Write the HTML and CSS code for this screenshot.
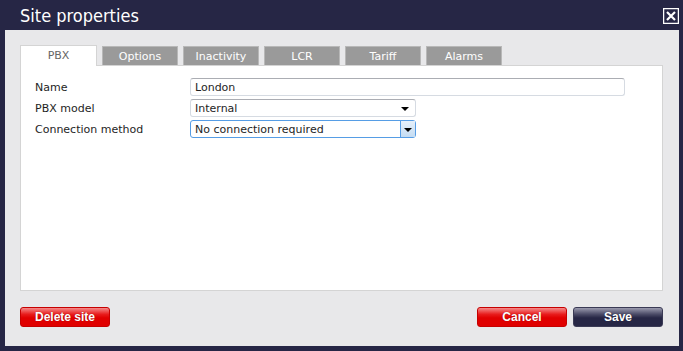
FILE: index.html
```html
<!DOCTYPE html>
<html lang="en">
<head>
    <meta charset="UTF-8">
    <title>Site properties</title>
    <link rel="stylesheet" href="styles.css">
</head>
<body>
    <div class="dialog">
        <div class="dialog-title">
            <h1>Site properties</h1>
            <button class="close" aria-label="Close">
                <svg width="16" height="16" viewBox="0 0 16 16">
                    <rect x="0.5" y="0.5" width="15" height="15" fill="none" stroke="#fff" stroke-width="1.5"/>
                    <path d="M4 4 L12 12 M12 4 L4 12" stroke="#fff" stroke-width="2.2"/>
                </svg>
            </button>
        </div>
        <div class="dialog-body">
            <div class="tabs">
                <div class="tab active">PBX</div>
                <div class="tab">Options</div>
                <div class="tab">Inactivity</div>
                <div class="tab">LCR</div>
                <div class="tab">Tariff</div>
                <div class="tab">Alarms</div>
            </div>
            <div class="tab-panel">
                <div class="form-row">
                    <label for="name">Name</label>
                    <input id="name" class="field field-wide" type="text" value="London">
                </div>
                <div class="form-row">
                    <label>PBX model</label>
                    <div class="field select">
                        <span>Internal</span>
                        <span class="arrow"></span>
                    </div>
                </div>
                <div class="form-row">
                    <label>Connection method</label>
                    <div class="field select focused">
                        <span>No connection required</span>
                        <span class="arrow-box"><span class="arrow"></span></span>
                    </div>
                </div>
            </div>
            <div class="dialog-buttons">
                <button class="btn btn-red">Delete site</button>
                <div class="btn-group">
                    <button class="btn btn-red">Cancel</button>
                    <button class="btn btn-navy">Save</button>
                </div>
            </div>
        </div>
    </div>
</body>
</html>
```

FILE: styles.css
```css
body {
    margin: 0;
    background: #262645;
    font-family: "DejaVu Sans", Verdana, sans-serif;
    font-size: 11px;
    color: #1e1e1e;
}

.dialog {
    width: 683px;
    height: 351px;
    display: flex;
    flex-direction: column;
}

.dialog-title {
    height: 30px;
    display: flex;
    align-items: center;
    justify-content: space-between;
    padding: 0 4px 0 20px;
}

.dialog-title h1 {
    margin: 0;
    font-family: "DejaVu Sans Condensed", "DejaVu Sans", sans-serif;
    font-weight: normal;
    font-size: 18px;
    color: #fff;
    padding-top: 1px;
}

.close {
    border: 0;
    background: none;
    padding: 0;
    width: 16px;
    height: 16px;
    display: block;
    margin-top: 1px;
}

.close svg {
    display: block;
}

.dialog-body {
    margin: 0 4px 5px 5px;
    height: 316px;
    box-sizing: border-box;
    background: #e8e8ea;
    padding: 15px 16px 0 15px;
}

.tabs {
    display: flex;
    gap: 5px;
    height: 20px;
    align-items: flex-end;
}

.tab {
    width: 74px;
    height: 18px;
    background: #9a9a9a;
    border: 1px solid #b8b8b8;
    border-bottom: 0;
    color: #fff;
    text-align: center;
    line-height: 19px;
}

.tab.active {
    width: 75px;
    height: 20px;
    background: #fff;
    border-color: #d4d4d4;
    color: #666;
    line-height: 20px;
    position: relative;
    z-index: 1;
    margin-bottom: -1px;
}

.tab-panel {
    height: 226px;
    box-sizing: border-box;
    background: #fff;
    border: 1px solid #d4d4d4;
    padding: 12px 0 0 14px;
    display: flex;
    flex-direction: column;
    gap: 3px;
}

.form-row {
    display: flex;
    align-items: center;
    height: 18px;
}

.form-row label {
    width: 155px;
}

.field {
    box-sizing: border-box;
    height: 18px;
    border: 1px solid #d6dbe2;
    border-top-color: #abadb3;
    border-radius: 3px;
    background: #fff;
    font: inherit;
    color: #1e1e1e;
    padding: 0 4px;
}

.field-wide {
    width: 435px;
}

.select {
    width: 226px;
    display: flex;
    align-items: center;
    justify-content: space-between;
    padding-right: 0;
}

.arrow {
    width: 0;
    height: 0;
    border-left: 4px solid transparent;
    border-right: 4px solid transparent;
    border-top: 4px solid #000;
    margin: 2px 6px 0 0;
}

.select.focused {
    border-color: #569de5;
}

.arrow-box {
    width: 15px;
    height: 16px;
    box-sizing: border-box;
    border-left: 1px solid #569de5;
    background: linear-gradient(#e6f0fa, #c4dcf2);
    display: flex;
    align-items: center;
    justify-content: center;
}

.arrow-box .arrow {
    margin: 2px 0 0 0;
}

.dialog-buttons {
    display: flex;
    justify-content: space-between;
    margin-top: 16px;
}

.btn-group {
    display: flex;
    gap: 6px;
}

.btn {
    width: 90px;
    height: 20px;
    border-radius: 3px;
    font-family: "Liberation Sans", Arial, sans-serif;
    font-weight: bold;
    font-size: 12px;
    color: #fff;
    text-shadow: 0 0 1px rgba(0, 0, 0, 0.4);
    padding: 0;
    cursor: pointer;
}

.btn-red {
    border: 1px solid #c60000;
    background: linear-gradient(#f58a8a 0%, #e81c1c 35%, #e00000 55%, #e00000 100%);
}

.btn-navy {
    border: 1px solid #3a3a55;
    background: linear-gradient(#9a9aae 0%, #4a4a66 35%, #262645 55%, #262645 100%);
}
```
